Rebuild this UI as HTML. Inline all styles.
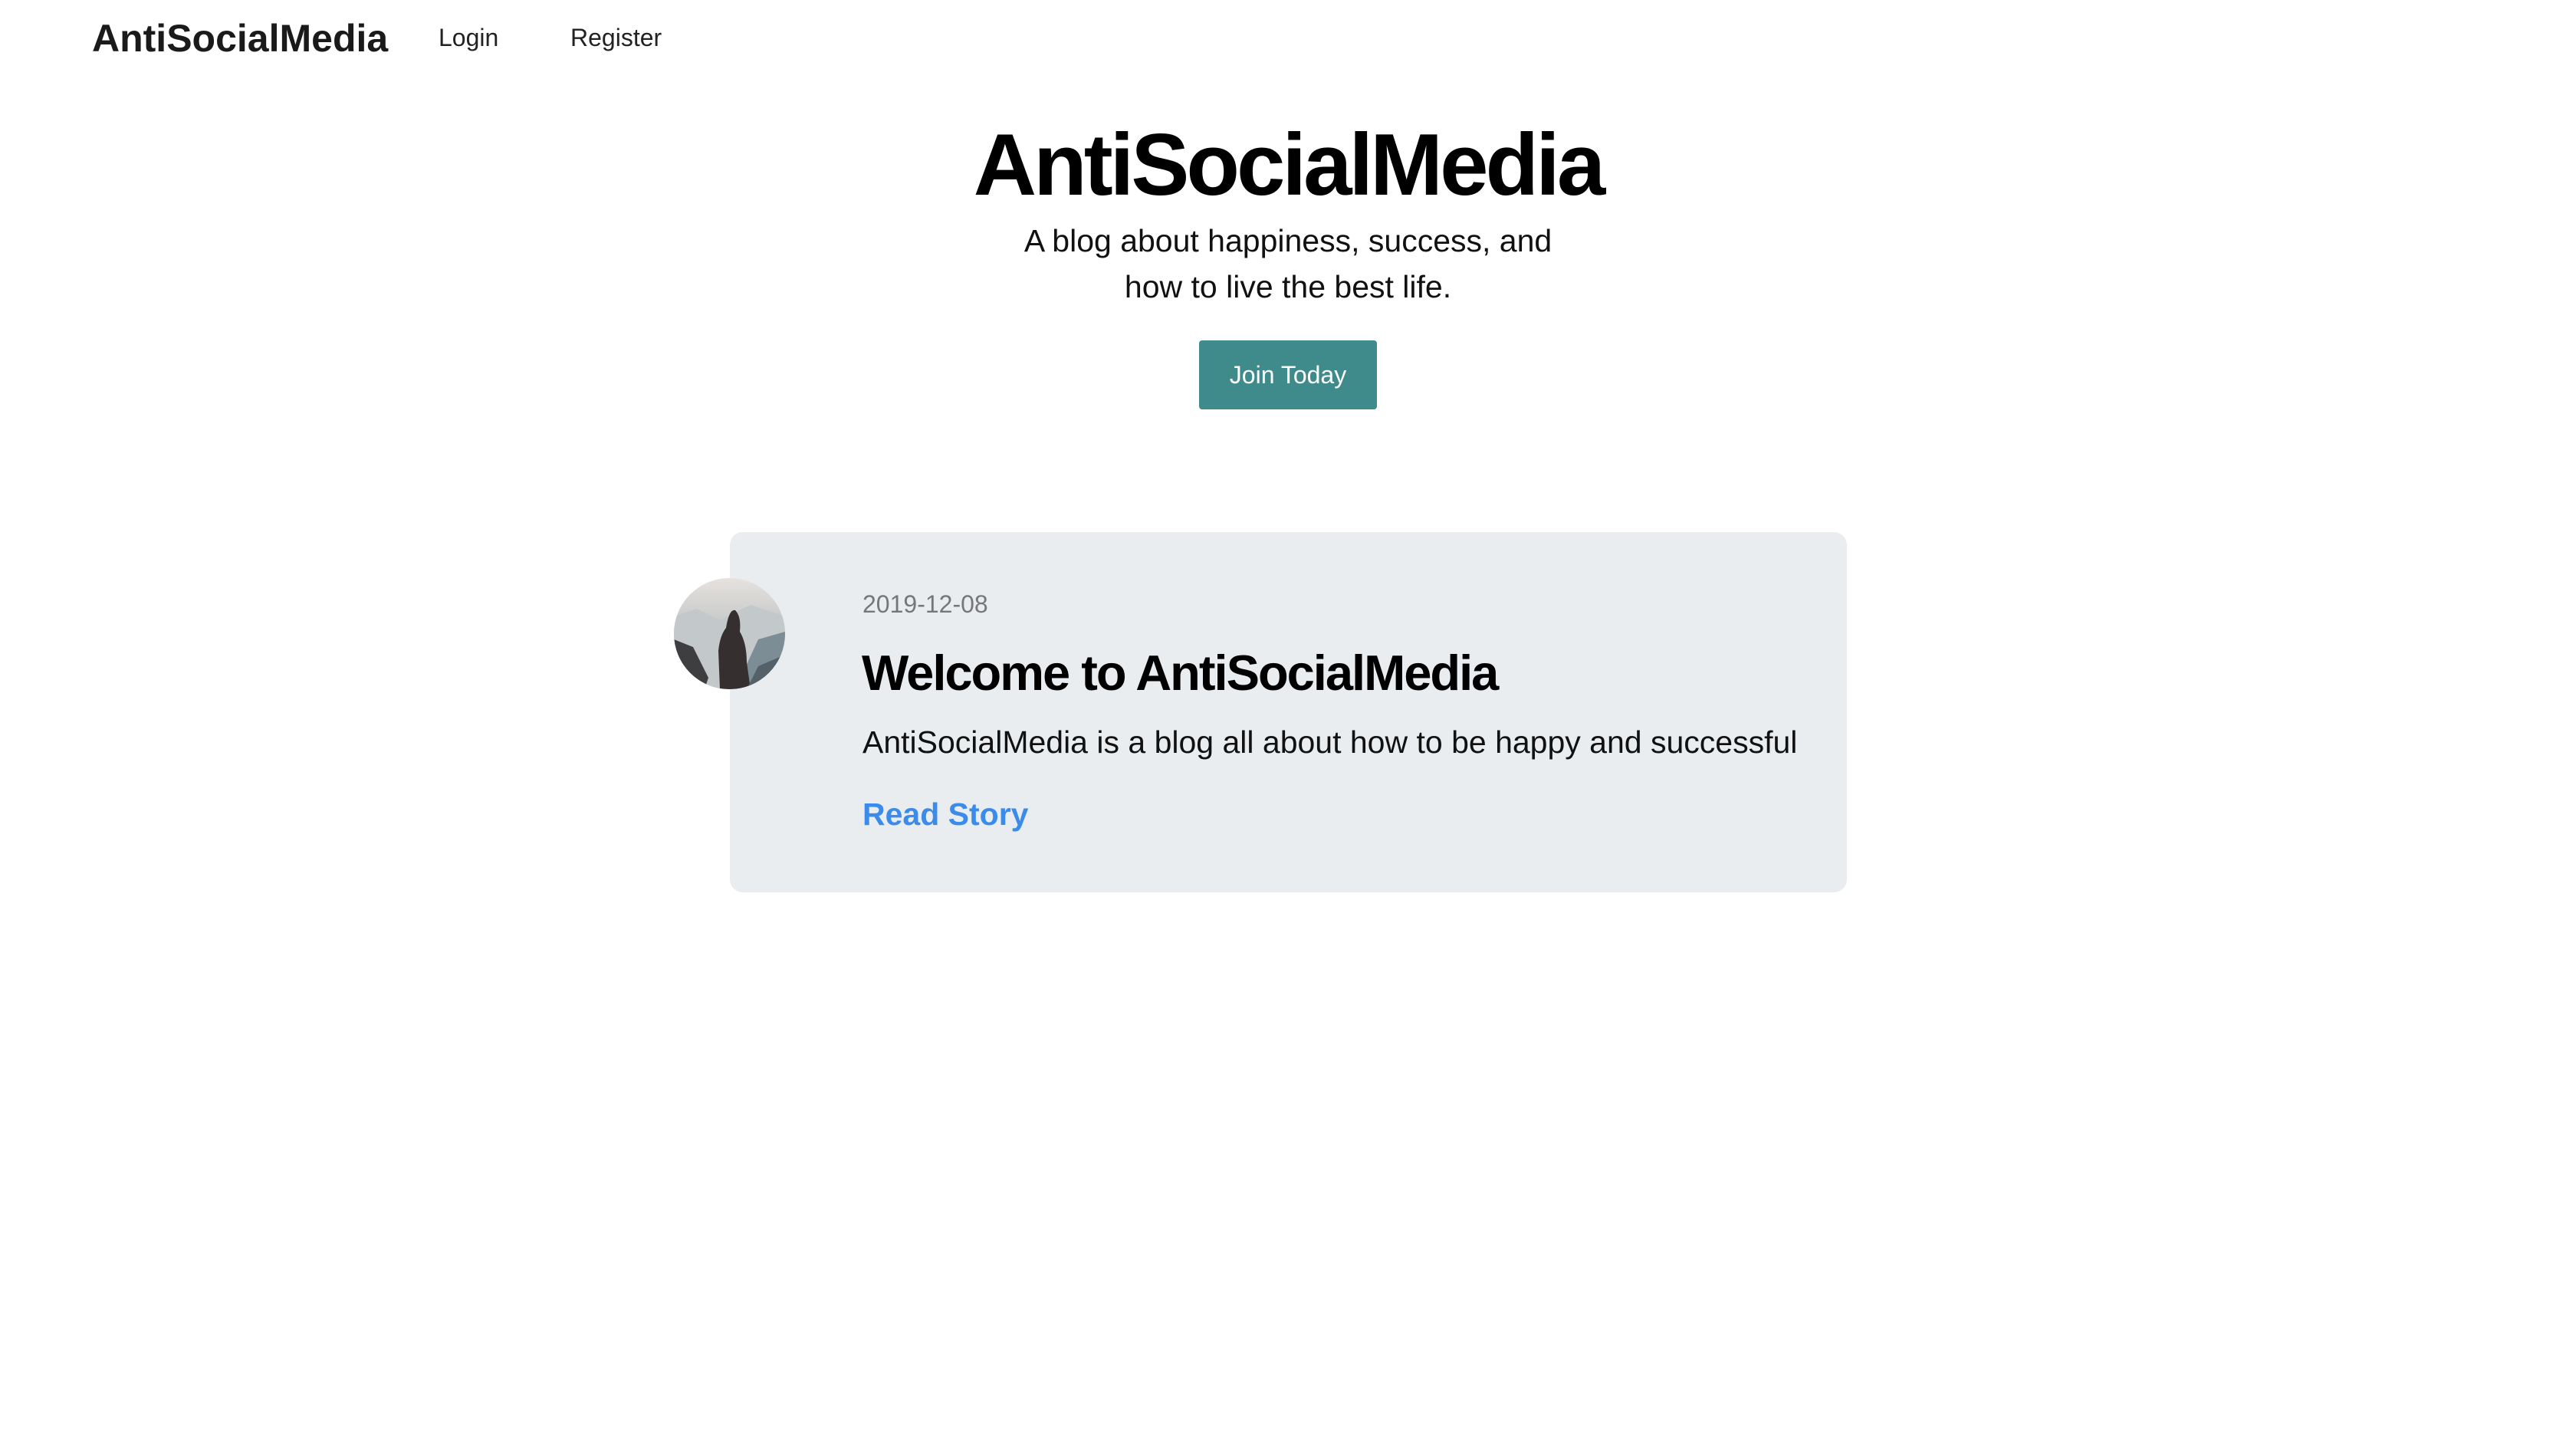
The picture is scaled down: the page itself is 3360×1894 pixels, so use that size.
<!DOCTYPE html>
<html><head><meta charset="utf-8"><style>
*{margin:0;padding:0;box-sizing:border-box}
body{width:3360px;height:1894px;background:#fff;font-family:"Liberation Sans",sans-serif;position:relative;overflow:hidden;color:#111}
.abs{position:absolute;white-space:nowrap}
</style></head><body>
<div class="abs" style="left:120px;top:21px;font-size:50px;font-weight:bold;color:#1a1a1a;letter-spacing:0px">AntiSocialMedia</div>
<div class="abs" style="left:572px;top:31px;font-size:32px;color:#222">Login</div>
<div class="abs" style="left:744px;top:31px;font-size:32px;color:#222">Register</div>

<div class="abs" style="left:0;width:3360px;text-align:center;top:150px;font-size:114px;font-weight:bold;letter-spacing:-4px;color:#000">AntiSocialMedia</div>
<div class="abs" style="left:0;width:3360px;text-align:center;top:284px;font-size:41px;line-height:60px;color:#111">A blog about happiness, success, and<br>how to live the best life.</div>
<div class="abs" style="left:1564px;top:444px;width:232px;height:90px;background:#3f8b8b;border-radius:4px;color:#fff;font-size:32px;line-height:90px;text-align:center">Join Today</div>

<div class="abs" style="left:952px;top:694px;width:1457px;height:470px;background:#e9edf0;border-radius:17px"></div>
<svg class="abs" style="left:879px;top:754px" width="145" height="145" viewBox="0 0 145 145">
<defs><clipPath id="c"><circle cx="72.5" cy="72.5" r="72.5"/></clipPath>
<linearGradient id="g" x1="0" y1="0" x2="0" y2="1"><stop offset="0" stop-color="#e6e2de"/><stop offset="1" stop-color="#9aa5ab"/></linearGradient></defs>
<g clip-path="url(#c)">
<rect width="145" height="145" fill="url(#g)"/>
<path d="M0 50 L30 40 L60 55 L100 35 L145 50 L145 145 L0 145Z" fill="#c3c8cb"/>
<path d="M80 145 L110 80 L145 70 L145 145Z" fill="#7d8d95"/>
<path d="M0 80 L25 90 L45 130 L40 145 L0 145Z" fill="#3e3e40"/>
<path d="M60 145 L58 95 Q60 75 68 65 Q72 40 80 42 Q88 50 86 70 Q95 85 95 110 L100 145Z" fill="#352f30"/>
<path d="M95 145 L110 115 L145 100 L145 145Z" fill="#556169"/>
</g></svg>
<div class="abs" style="left:1125px;top:770px;font-size:32px;color:#777">2019-12-08</div>
<div class="abs" style="left:1124px;top:840px;font-size:65px;font-weight:bold;letter-spacing:-2px;color:#000">Welcome to AntiSocialMedia</div>
<div class="abs" style="left:1125px;top:945px;font-size:41px;color:#111">AntiSocialMedia is a blog all about how to be happy and successful</div>
<div class="abs" style="left:1125px;top:1039px;font-size:41px;font-weight:bold;color:#3b8beb">Read Story</div>
</body></html>
